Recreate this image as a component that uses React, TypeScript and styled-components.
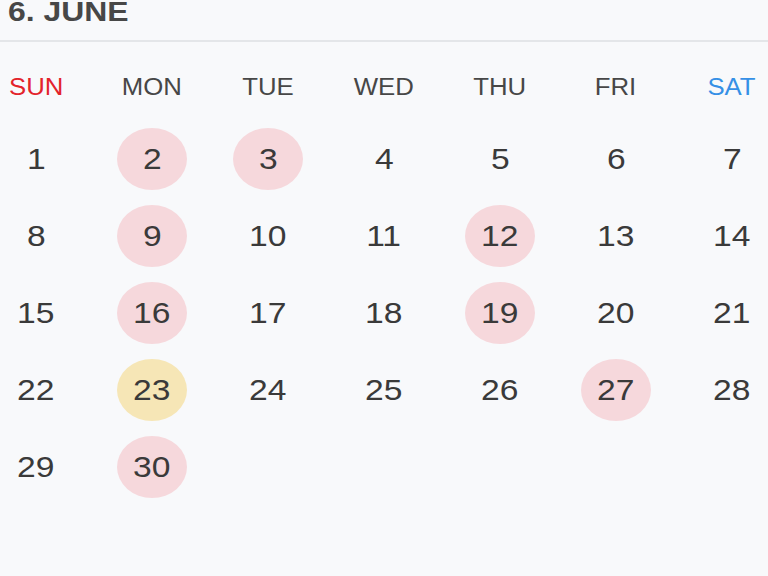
import React from 'react';
import styled, { createGlobalStyle } from 'styled-components';

type Mark = 'none' | 'pink' | 'yellow';

interface Day {
  n: number;
  mark: Mark;
}

const GlobalStyle = createGlobalStyle`
  html, body {
    margin: 0;
    padding: 0;
    background: #f8f9fb;
    font-family: "Liberation Sans", Arial, sans-serif;
    color: #3d3d3d;
  }
`;

const Page = styled.div`
  width: 768px;
  height: 576px;
  overflow: hidden;
  background: #f8f9fb;
`;

const Header = styled.div`
  height: 40px;
  border-bottom: 2px solid #e4e6e9;
  padding-left: 8px;
`;

const Title = styled.h1`
  margin: 0;
  font-size: 28px;
  line-height: 24px;
  font-weight: bold;
  color: #474747;
`;

// the shot is a little stretched sideways, so text is widened to match
const Wide = styled.span`
  display: inline-block;
  transform: scaleX(1.12);
  transform-origin: center;
`;

const TitleText = styled(Wide)`
  transform: scaleX(1.14);
  transform-origin: left center;
`;

const WeekRow = styled.div`
  display: grid;
  grid-template-columns: repeat(7, 70px);
  column-gap: 46px;
  padding-top: 21px;
  padding-left: 1px;
`;

const WeekDay = styled.div<{ $tone: 'sun' | 'sat' | 'plain' }>`
  height: 48px;
  line-height: 48px;
  text-align: center;
  font-size: 23px;
  color: ${p => (p.$tone === 'sun' ? '#e3232b' : p.$tone === 'sat' ? '#3590e6' : '#474747')};
`;

const DayGrid = styled.div`
  display: grid;
  grid-template-columns: repeat(7, 70px);
  grid-auto-rows: 62px;
  column-gap: 46px;
  row-gap: 15px;
  margin-top: 17px;
  padding-left: 1px;
`;

const DayCell = styled.div<{ $mark: Mark }>`
  display: flex;
  align-items: center;
  justify-content: center;
  border-radius: 50%;
  font-size: 30px;
  color: #3a3a3a;
  background: ${p => (p.$mark === 'pink' ? '#f6d8dc' : p.$mark === 'yellow' ? '#f6e6b6' : 'transparent')};
`;

const weekdays = ['SUN', 'MON', 'TUE', 'WED', 'THU', 'FRI', 'SAT'];

const pink = [2, 3, 9, 12, 16, 19, 27, 30];
const yellow = [23];

const days: Day[] = Array.from({ length: 30 }, (_, i) => {
  const n = i + 1;
  const mark: Mark = yellow.includes(n) ? 'yellow' : pink.includes(n) ? 'pink' : 'none';
  return { n, mark };
});

const App: React.FC = () => {
  return (
    <Page>
      <GlobalStyle />
      <Header>
        <Title>
          <TitleText>6. JUNE</TitleText>
        </Title>
      </Header>
      <WeekRow>
        {weekdays.map((w, i) => (
          <WeekDay key={w} $tone={i === 0 ? 'sun' : i === 6 ? 'sat' : 'plain'}>
            <Wide>{w}</Wide>
          </WeekDay>
        ))}
      </WeekRow>
      <DayGrid>
        {days.map(d => (
          <DayCell key={d.n} $mark={d.mark}>
            <Wide>{d.n}</Wide>
          </DayCell>
        ))}
      </DayGrid>
    </Page>
  );
};

export default App;
